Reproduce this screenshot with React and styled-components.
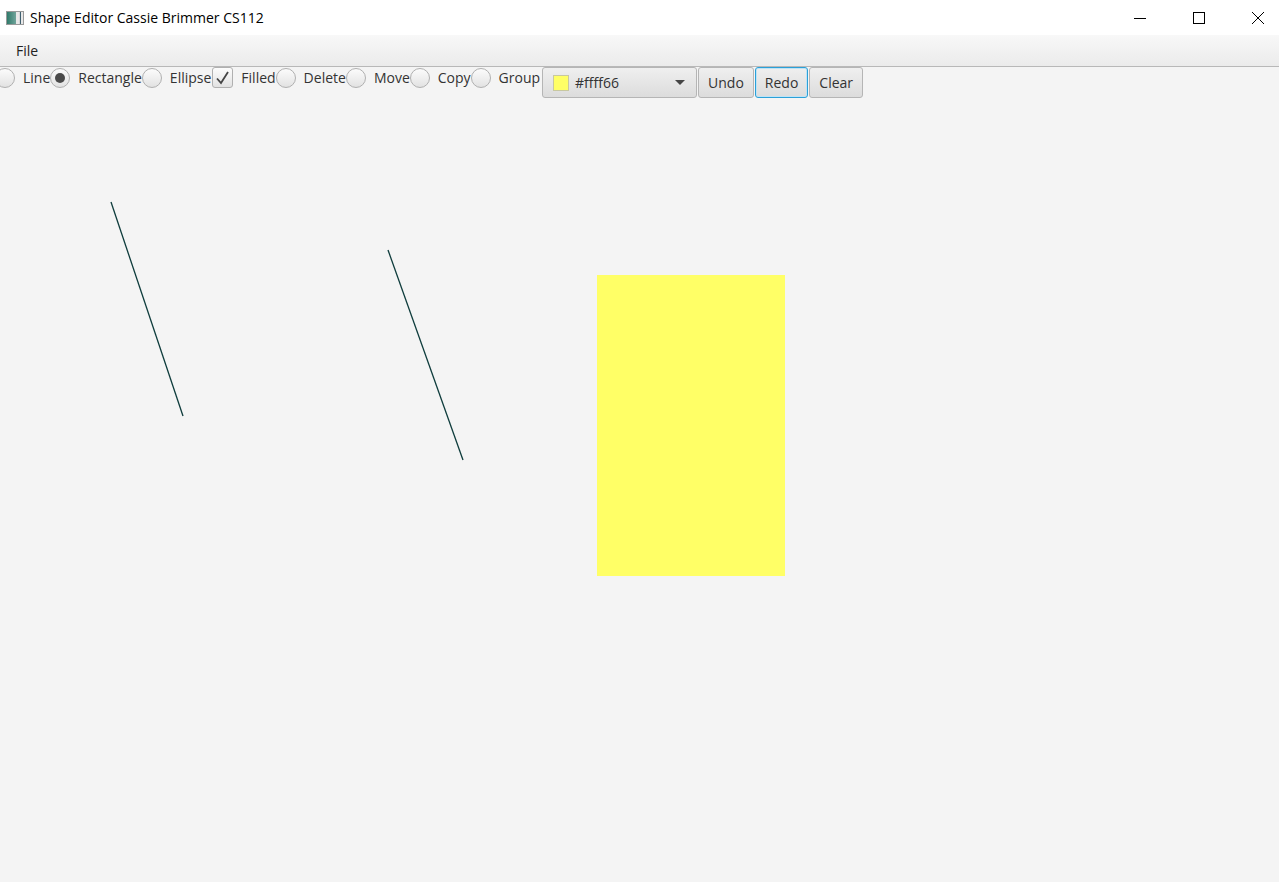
import React from "react";
import styled, { createGlobalStyle } from "styled-components";

const GlobalStyle = createGlobalStyle`
  html, body {
    margin: 0;
    padding: 0;
    background: #f4f4f4;
    font-family: "Open Sans", "Noto Sans", sans-serif;
    color: #333;
    overflow: hidden;
  }
`;

const Window = styled.div`
  width: 1279px;
  height: 882px;
  display: flex;
  flex-direction: column;
  background: #f4f4f4;
  overflow: hidden;
`;

const TitleBar = styled.div`
  height: 35px;
  flex: none;
  background: #fff;
  display: flex;
  align-items: center;
  padding-left: 6px;
`;

const AppIcon = styled.div`
  width: 18px;
  height: 14px;
  margin-top: 1px;
  border: 1px solid #9a9a9a;
  box-sizing: border-box;
  background: linear-gradient(90deg, #2f7a6a 0%, #6fa39a 55%, #e8e8e8 56%, #e8e8e8 78%, #3f5f6f 79%, #3f5f6f 85%, #e8e8e8 86%);
`;

const Title = styled.span`
  margin-left: 6px;
  font-size: 14px;
  color: #000;
`;

const Controls = styled.div`
  margin-left: auto;
  margin-right: -8px;
  display: flex;
  height: 100%;
`;

const ControlBtn = styled.div`
  width: 59px;
  height: 100%;
  display: flex;
  align-items: center;
  justify-content: center;
`;

const MenuBar = styled.div`
  height: 31px;
  flex: none;
  background: linear-gradient(#f8f8f8, #ebebeb);
  border-bottom: 1px solid #b8b8b8;
  display: flex;
  align-items: center;
`;

const MenuItem = styled.span`
  font-size: 14px;
  color: #222;
  padding: 0 8px 0 16px;
`;

const Main = styled.div`
  flex: 1;
  position: relative;
`;

const Toolbar = styled.div`
  position: relative;
  z-index: 1;
  display: flex;
  align-items: flex-start;
  margin-left: -5px;
`;

const Option = styled.label`
  display: flex;
  align-items: center;
  height: 21px;
  font-size: 14px;
  color: #333;
`;

const Radio = styled.span`
  width: 20px;
  height: 20px;
  box-sizing: border-box;
  border-radius: 50%;
  border: 1px solid #b0b0b0;
  background: linear-gradient(#fcfcfc, #e2e2e2);
  margin-right: 8px;
  display: flex;
  align-items: center;
  justify-content: center;
  &::after {
    content: "";
    width: 10px;
    height: 10px;
    border-radius: 50%;
    background: #4a4a4a;
    display: ${(p) => (p.checked ? "block" : "none")};
  }
`;

const Check = styled.span`
  width: 21px;
  height: 21px;
  box-sizing: border-box;
  border-radius: 3px;
  border: 1px solid #b0b0b0;
  background: linear-gradient(#fcfcfc, #e2e2e2);
  margin: 0 8px 0 1px;
  display: flex;
  align-items: center;
  justify-content: center;
`;

const Button = styled.button`
  height: 31px;
  box-sizing: border-box;
  padding: 0 9px;
  margin-left: 1px;
  font-family: inherit;
  font-size: 14px;
  color: #333;
  border-radius: 3px;
  border: 1px solid ${(p) => (p.focused ? "#2ba0d8" : "#b5b5b5")};
  box-shadow: ${(p) => (p.focused ? "inset 0 0 0 1px #bfe3f5" : "none")};
  background: linear-gradient(#efefef, #dcdcdc);
  display: flex;
  align-items: center;
`;

const ColorPicker = styled(Button)`
  width: 155px;
  margin-left: 2px;
  padding: 0 10px;
`;

const Swatch = styled.span`
  width: 16px;
  height: 16px;
  box-sizing: border-box;
  border: 1px solid #c8c8a0;
  background: ${(p) => p.color};
  margin-right: 6px;
`;

const Arrow = styled.span`
  margin-left: auto;
  margin-right: 1px;
  width: 0;
  height: 0;
  border-left: 5px solid transparent;
  border-right: 5px solid transparent;
  border-top: 5px solid #444;
`;

const Canvas = styled.svg`
  position: absolute;
  left: 0;
  top: 0;
  width: 100%;
  height: 100%;
`;

const tools = [
  { label: "Line" },
  { label: "Rectangle", checked: true },
  { label: "Ellipse" },
];

const actions = ["Delete", "Move", "Copy", "Group"];

const App = () => {
  return (
    <Window>
      <GlobalStyle />
      <TitleBar>
        <AppIcon />
        <Title>Shape Editor Cassie Brimmer CS112</Title>
        <Controls>
          <ControlBtn>
            <svg width="12" height="12" viewBox="0 0 12 12">
              <line x1="0" y1="6.5" x2="12" y2="6.5" stroke="#000" strokeWidth="1" />
            </svg>
          </ControlBtn>
          <ControlBtn>
            <svg width="12" height="12" viewBox="0 0 12 12">
              <rect x="0.5" y="0.5" width="11" height="11" fill="none" stroke="#000" strokeWidth="1" />
            </svg>
          </ControlBtn>
          <ControlBtn>
            <svg width="12" height="12" viewBox="0 0 12 12">
              <path d="M0 0 L12 12 M12 0 L0 12" stroke="#000" strokeWidth="1" />
            </svg>
          </ControlBtn>
        </Controls>
      </TitleBar>
      <MenuBar>
        <MenuItem>File</MenuItem>
      </MenuBar>
      <Main>
        <Canvas>
          <line x1="111" y1="135" x2="183" y2="349" stroke="#0e3c3c" strokeWidth="1.3" />
          <line x1="388" y1="183" x2="463" y2="393" stroke="#0e3c3c" strokeWidth="1.3" />
          <rect x="597" y="208" width="188" height="301" fill="#ffff66" />
        </Canvas>
        <Toolbar>
          {tools.map((t) => (
            <Option key={t.label}>
              <Radio checked={t.checked} />
              {t.label}
            </Option>
          ))}
          <Option>
            <Check>
              <svg width="15" height="14" viewBox="0 0 15 14">
                <path d="M2 7.5 L6 12 L13 1" fill="none" stroke="#444" strokeWidth="1.8" />
              </svg>
            </Check>
            Filled
          </Option>
          {actions.map((a) => (
            <Option key={a}>
              <Radio />
              {a}
            </Option>
          ))}
          <ColorPicker>
            <Swatch color="#ffff66" />
            #ffff66
            <Arrow />
          </ColorPicker>
          <Button>Undo</Button>
          <Button focused>Redo</Button>
          <Button>Clear</Button>
        </Toolbar>
      </Main>
    </Window>
  );
};

export default App;
